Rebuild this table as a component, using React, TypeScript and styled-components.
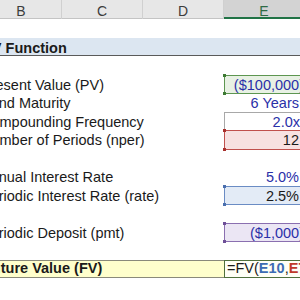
import React from 'react';
import styled, { createGlobalStyle, css } from 'styled-components';

const GlobalStyle = createGlobalStyle`
  html, body {
    margin: 0;
    padding: 0;
    background: #ffffff;
    overflow: hidden;
  }
  body {
    font-family: "Liberation Sans", Arial, sans-serif;
  }
`;

const Sheet = styled.div`
  width: 324px;
  margin-left: -19px;
`;

const HeaderRow = styled.div`
  display: grid;
  grid-template-columns: repeat(4, 81px);
  height: 19px;
  box-sizing: border-box;
  background: #e7e7e7;
  border-bottom: 1px solid #c4c4c4;
`;

const ColHead = styled.div<{ $active?: boolean }>`
  box-sizing: border-box;
  padding-top: 4px;
  text-align: center;
  font-size: 14px;
  line-height: 15px;
  color: #3c3c3c;
  border-right: 1px solid #d0d0d0;
  ${p => p.$active && css`
    background: #d3d3d3;
    color: #2f6b45;
    box-shadow: inset 0 -2px 0 #217346;
  `}
`;

type Tone = 'plain' | 'title' | 'total';

const Row = styled.div<{ $tone: Tone }>`
  display: grid;
  grid-template-columns: 243px 81px;
  height: 18.5px;
  box-sizing: border-box;
  font-size: 14.5px;
  line-height: 16.5px;
  color: #1a1a1a;
  ${p => p.$tone === 'title' && css`
    background: #dce6f1;
    border-bottom: 1px solid #5a5a5a;
    font-weight: bold;
  `}
`;

const Label = styled.div<{ $total?: boolean }>`
  padding-top: 2px;
  white-space: nowrap;
  ${p => p.$total && css`
    padding-top: 0;
    padding-left: 2px;
    background: #ffffcc;
    border-top: 1px solid #8a8a7a;
    border-bottom: 1px solid #8a8a7a;
    font-weight: bold;
    line-height: 15.5px;
  `}
`;

const Title = styled.span`
  padding-left: 2px;
`;

type Box = 'green' | 'gray' | 'red' | 'blue' | 'purple';

const boxColors: Record<Box, { line: string; fill: string; dot: string }> = {
  green: { line: '#5d9650', fill: '#e8f1e4', dot: '#3d7a33' },
  gray: { line: '#a8a8a8', fill: '#ffffff', dot: '#a8a8a8' },
  red: { line: '#c0504d', fill: '#f7e1e1', dot: '#a8302d' },
  blue: { line: '#6a8cc4', fill: '#e3ebf6', dot: '#4a6fae' },
  purple: { line: '#8a6fb0', fill: '#ebe6f4', dot: '#6e4f98' },
};

const Value = styled.div<{ $box?: Box; $input?: boolean; $neg?: boolean }>`
  position: relative;
  box-sizing: border-box;
  padding-top: 2px;
  text-align: right;
  white-space: nowrap;
  padding-right: ${p => (p.$neg ? 0 : 6)}px;
  color: ${p => (p.$input ? '#2a30a8' : '#1a1a1a')};
  ${p => p.$box && css`
    padding-top: 1px;
    padding-right: ${p.$neg ? 0 : 5}px;
    background: ${boxColors[p.$box].fill};
    border: 1px solid ${boxColors[p.$box].line};
  `}
  ${p => p.$box === 'gray' && css`
    border-bottom: none;
    border-right: none;
  `}
  ${p => p.$box && p.$box !== 'gray' && css`
    &::before,
    &::after {
      content: '';
      position: absolute;
      left: -2px;
      width: 3px;
      height: 3px;
      background: ${boxColors[p.$box].dot};
    }
    &::before { top: -2px; }
    &::after { bottom: -2px; }
  `}
`;

const Formula = styled.div`
  box-sizing: border-box;
  border: 1px solid #50703c;
  background: #fffff6;
  padding-left: 2px;
  white-space: nowrap;
  line-height: 15.5px;
  color: #1a1a1a;
`;

const Ref = styled.b<{ $color: string }>`
  color: ${p => p.$color};
`;

interface Line {
  label?: string;
  value?: string;
  box?: Box;
  input?: boolean;
  neg?: boolean;
  tone?: Tone;
}

const lines: Line[] = [
  {},
  { label: 'FV Function', tone: 'title' },
  {},
  { label: 'Present Value (PV)', value: '($100,000)', box: 'green', input: true, neg: true },
  { label: 'Bond Maturity', value: '6 Years', input: true },
  { label: 'Compounding Frequency', value: '2.0x', box: 'gray', input: true },
  { label: 'Number of Periods (nper)', value: '12', box: 'red' },
  {},
  { label: 'Annual Interest Rate', value: '5.0%', input: true },
  { label: 'Periodic Interest Rate (rate)', value: '2.5%', box: 'blue' },
  {},
  { label: 'Periodic Deposit (pmt)', value: '($1,000)', box: 'purple', input: true, neg: true },
  {},
  { label: 'Future Value (FV)', tone: 'total' },
  {},
];

const App: React.FC = () => {
  return (
    <>
      <GlobalStyle />
      <Sheet>
        <HeaderRow>
          <ColHead>B</ColHead>
          <ColHead>C</ColHead>
          <ColHead>D</ColHead>
          <ColHead $active>E</ColHead>
        </HeaderRow>

        {lines.map((line, i) => {
          const tone = line.tone ?? 'plain';
          if (tone === 'title') {
            return (
              <Row key={i} $tone="title">
                <Label><Title>{line.label}</Title></Label>
                <div />
              </Row>
            );
          }
          if (tone === 'total') {
            return (
              <Row key={i} $tone="total">
                <Label $total>{line.label}</Label>
                <Formula>
                  =FV(<Ref $color="#3d6cb4">E10</Ref>,<Ref $color="#c0392b">E7</Ref>,
                  <Ref $color="#7a52a8">E12</Ref>,<Ref $color="#3f8a35">E4</Ref>)
                </Formula>
              </Row>
            );
          }
          return (
            <Row key={i} $tone="plain">
              <Label>{line.label}</Label>
              {line.value ? (
                <Value $box={line.box} $input={line.input} $neg={line.neg}>
                  {line.value}
                </Value>
              ) : (
                <div />
              )}
            </Row>
          );
        })}
      </Sheet>
    </>
  );
};

export default App;
